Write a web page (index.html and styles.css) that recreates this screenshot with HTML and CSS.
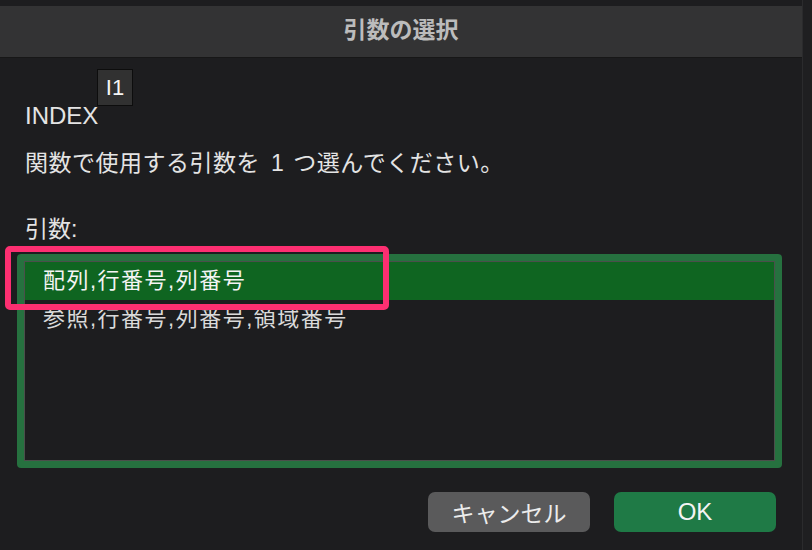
FILE: index.html
```html
<!DOCTYPE html>
<html lang="ja">
<head>
    <meta charset="UTF-8">
    <meta name="viewport" content="width=device-width, initial-scale=1.0">
    <title>引数の選択</title>
    <link rel="stylesheet" href="styles.css">
</head>
<body>
    <div class="screen">
        <div class="dialog">
            <div class="titlebar">引数の選択</div>
            <div class="content">
                <div class="func">INDEX</div>
                <p class="desc">関数で使用する引数を<span class="num">1</span>つ選んでください。</p>
                <div class="label">引数:</div>
                <div class="list-wrap">
                    <div class="list">
                        <div class="list-inner">
                            <div class="row selected">配列,行番号,列番号</div>
                            <div class="row">参照,行番号,列番号,領域番号</div>
                        </div>
                    </div>
                    <div class="highlight"></div>
                </div>
                <div class="actions">
                    <button class="btn cancel">キャンセル</button>
                    <button class="btn ok">OK</button>
                </div>
            </div>
            <div class="tip">I1</div>
        </div>
        <div class="edge"></div>
    </div>
</body>
</html>
```

FILE: styles.css
```css
body {
    margin: 0;
    padding: 0;
    background-color: #1d1d1f;
    font-family: "Liberation Sans", "Noto Sans CJK JP", sans-serif;
    color: #e4e4e4;
}

.screen {
    display: flex;
    height: 550px;
    overflow: hidden;
}

.dialog {
    position: relative;
    width: 802px;
    padding-top: 6px;
}

.edge {
    flex: 1;
    background-color: #1f1f21;
    border-left: 1px solid #2b2b2d;
}

.titlebar {
    height: 51px;
    line-height: 48px;
    background-color: #333334;
    border-bottom: 1px solid #171717;
    text-align: center;
    font-size: 23px;
    font-weight: bold;
    color: #bcbcbc;
}

.content {
    padding: 0 20px 0 17px;
}

.func {
    margin-top: 43px;
    padding-left: 8px;
    font-size: 24px;
    line-height: 30px;
}

.desc {
    margin: 17px 0 0 0;
    padding-left: 8px;
    font-size: 23px;
    line-height: 30px;
    letter-spacing: 0.5px;
}

.num {
    margin: 0 9px 0 11px;
}

.label {
    margin-top: 36px;
    padding-left: 8px;
    font-size: 23px;
    line-height: 30px;
}

.list-wrap {
    position: relative;
    margin-top: 10px;
}

.list {
    border: 7px solid #26713f;
    border-radius: 4px;
}

.list-inner {
    height: 198px;
    border: 1px solid #4b4f4b;
    background-color: #1d1d1f;
}

.row {
    height: 38px;
    line-height: 38px;
    padding-left: 18px;
    font-size: 22px;
    letter-spacing: 1.5px;
    color: #dadada;
}

.row.selected {
    background-color: #0f6521;
    color: #f4f4f4;
}

/* annotation box drawn over the first row */
.highlight {
    position: absolute;
    left: -12px;
    top: -8px;
    width: 372px;
    height: 52px;
    border: 6px solid #fd2f71;
    border-radius: 5px;
}

.actions {
    display: flex;
    justify-content: flex-end;
    gap: 24px;
    margin-top: 24px;
    padding-right: 6px;
}

.btn {
    width: 162px;
    height: 40px;
    border: none;
    border-radius: 7px;
    font-family: "Liberation Sans", "Noto Sans CJK JP", sans-serif;
    font-size: 23px;
    color: #ececec;
    cursor: pointer;
}

.btn.cancel {
    background-color: #5a5a5b;
}

.btn.ok {
    background-color: #1f7a46;
    font-size: 24px;
    color: #f4f4f4;
}

.tip {
    position: absolute;
    left: 97px;
    top: 69px;
    width: 34px;
    height: 35px;
    line-height: 35px;
    background-color: #313131;
    border: 1px solid #0d0d0d;
    text-align: center;
    font-size: 22px;
    color: #f5f5f5;
}
```
